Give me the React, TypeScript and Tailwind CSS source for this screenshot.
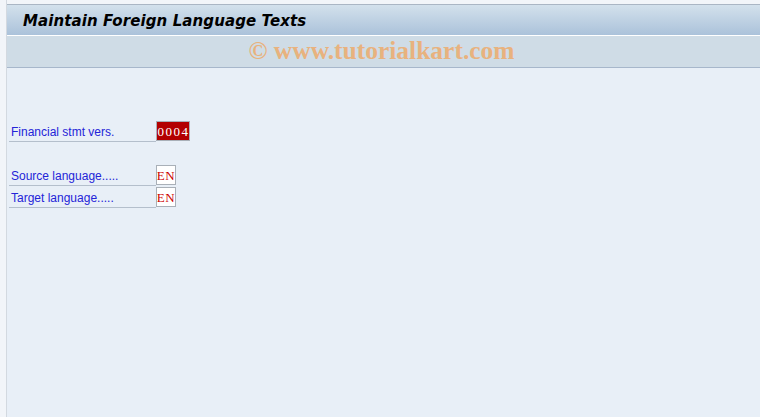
const Field = ({ label, value, wide, dark }: { label: string; value: string; wide?: boolean; dark?: boolean }) => (
  <div className="flex items-end h-[22px]">
    <div
      className="w-[147px] h-[21px] border-b border-[#b4bfcc] flex items-end pb-[3px] pl-[2px] text-[12px] leading-none text-[#2424d8]"
      style={{ fontFamily: '"Liberation Sans", Arial, sans-serif' }}
    >
      {label}
    </div>
    <div
      className={
        (wide ? "w-[34px] tracking-[1.5px] pl-[1px] " : "w-[20px] tracking-[0.5px] ") +
        (dark ? "bg-[#b30000] text-white " : "bg-white text-[#cc0000] ") +
        "h-[20px] border border-[#a9b0b8] flex items-center justify-center text-[13px] leading-none mb-[1px]"
      }
      style={{ fontFamily: '"Liberation Serif", serif' }}
    >
      {value}
    </div>
  </div>
);

export default function App() {
  return (
    <div
      className="w-[760px] h-[417px] flex bg-[#f2f5f9] overflow-hidden"
      style={{ fontFamily: '"DejaVu Sans", Tahoma, sans-serif' }}
    >
      <div className="w-[6px] shrink-0" />
      <div className="flex-1 flex flex-col border-l border-[#d3d9e0] pt-[4px]">
        <div className="border-t border-[#aab6c4]">
          <div className="h-[30px] bg-gradient-to-b from-[#d3e1ec] to-[#abc2da] flex items-center pl-[16px] pt-[2px]">
            <span className="text-[15px] font-bold italic text-black tracking-[0.1px]">
              Maintain Foreign Language Texts
            </span>
          </div>
          <div className="h-[1px] bg-white" />
          <div className="h-[32px] bg-[#cfdce6] border-b border-[#a7b7cb] flex items-center justify-center">
            <span
              className="text-[25.5px] font-bold text-[#e8b27e] pr-[4px]"
              style={{ fontFamily: '"Liberation Serif", serif' }}
            >
              © www.tutorialkart.com
            </span>
          </div>
        </div>
        <div className="flex-1 bg-[#e8eff7] pl-[2px] pt-[52px]">
          <Field label="Financial stmt vers." value="0004" wide dark />
          <div className="h-[22px]" />
          <Field label="Source language....." value="EN" />
          <Field label="Target language....." value="EN" />
        </div>
      </div>
    </div>
  );
}
